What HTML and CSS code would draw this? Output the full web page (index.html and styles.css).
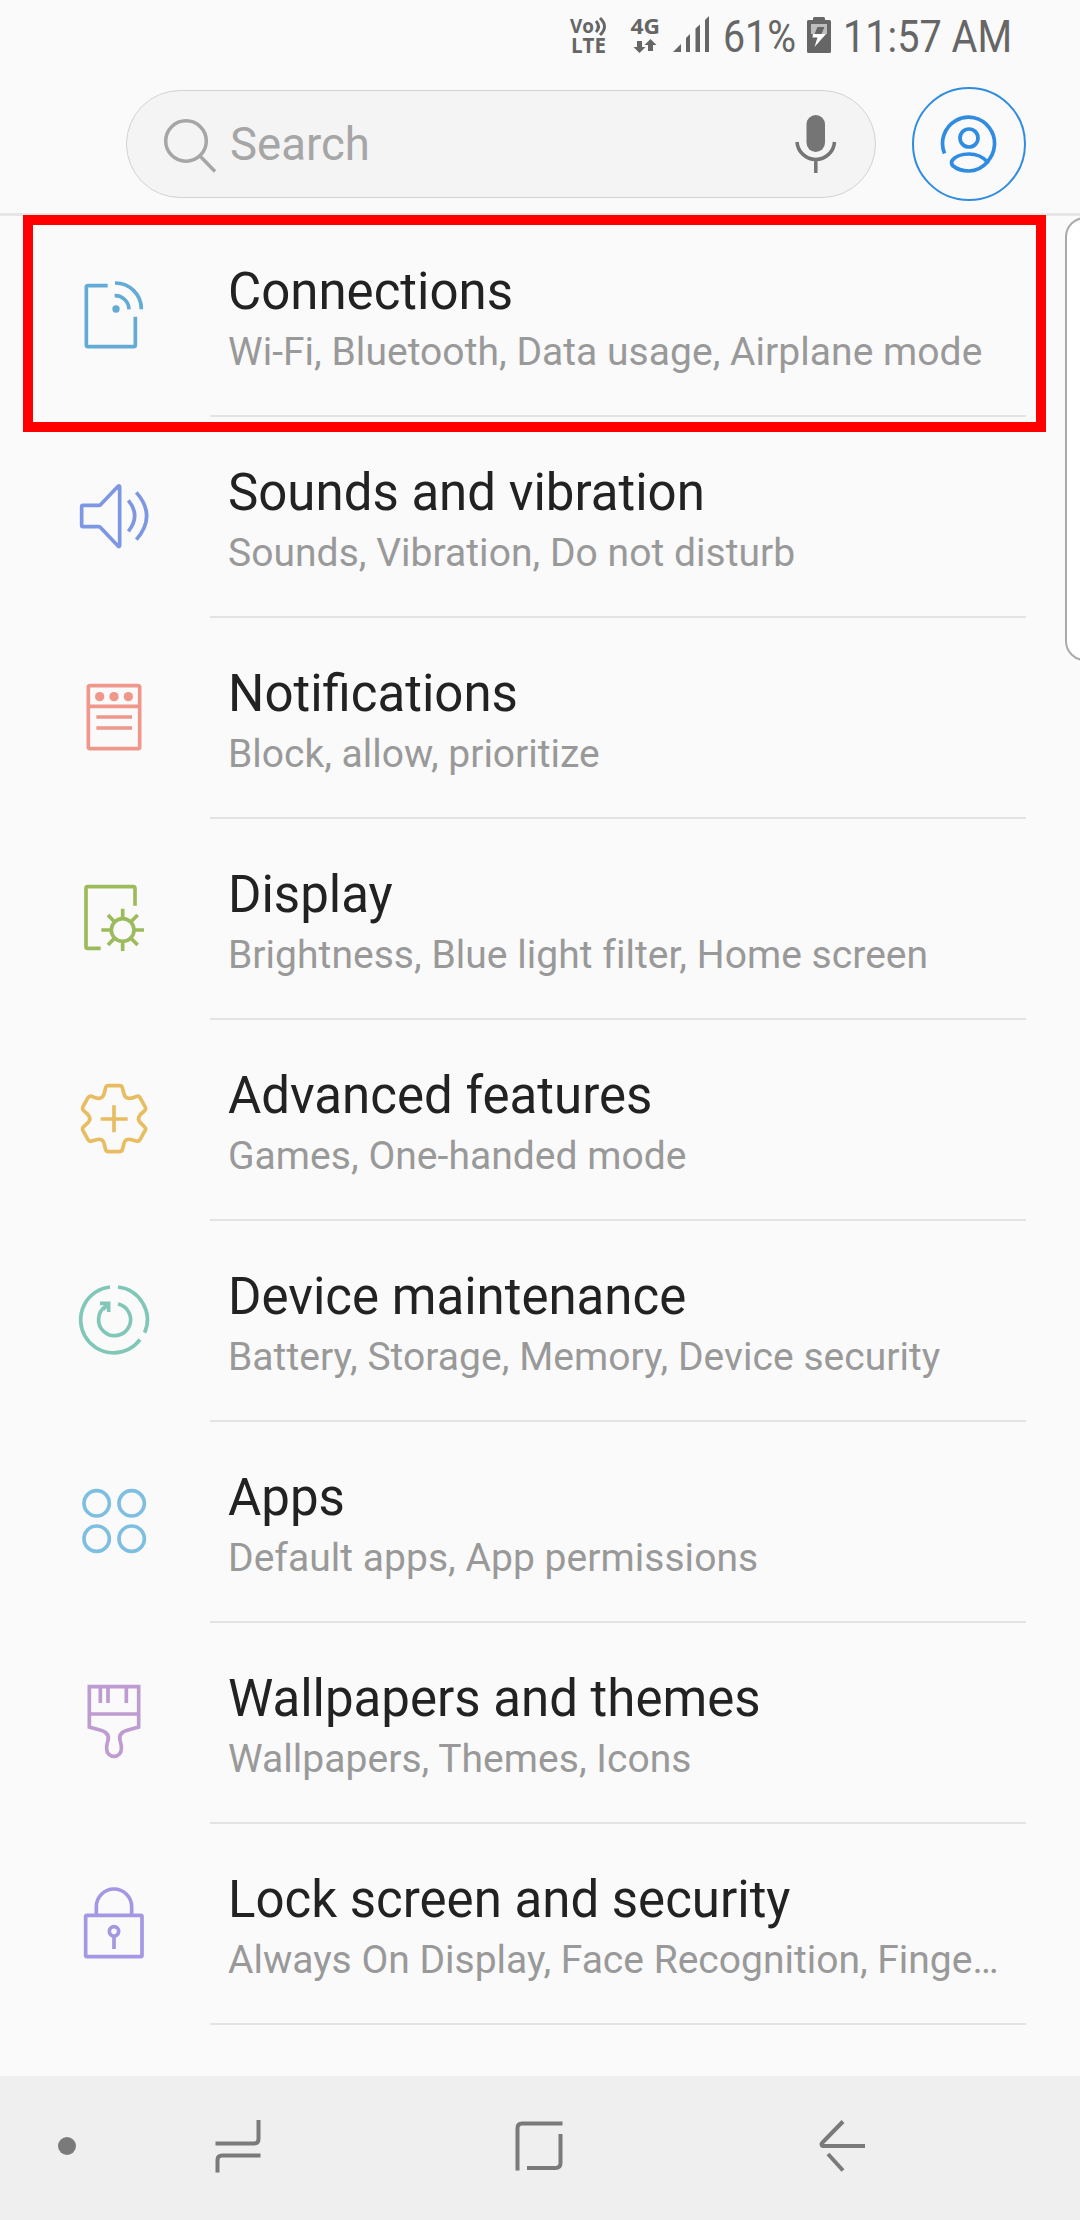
FILE: index.html
```html
<!DOCTYPE html>
<html lang="en">
<head>
    <meta charset="UTF-8">
    <title>Settings</title>
    <link rel="stylesheet" href="styles.css">
</head>
<body>
    <div class="phone">
        <header class="header">
            <!-- status bar -->
            <svg class="status" viewBox="540 0 540 70">
                <g class="status-small">
                    <text x="570" y="32.500" font-size="20" textLength="24" lengthAdjust="spacingAndGlyphs">Vo</text>
                    <text x="571" y="53" font-size="21" textLength="35" lengthAdjust="spacingAndGlyphs">LTE</text>
                    <text x="630.500" y="34" font-size="22" textLength="29.500" lengthAdjust="spacingAndGlyphs">4G</text>
                </g>
                <path class="wave" d="M596 21q5 5.500 0 11M600 18q9 8.500 0 17"/>
                <path d="M637 41h5v6h3.500l-6 6-6-6h3.500zM648 51h5v-6h3.500l-6-6-6 6h3.500z"/>
                <path d="M673 52l8-8v8zM686 38l4-4v18h-4zM695.500 28.500l4.500-4v27.500h-4.500zM705 20l4-4v36h-4z"/>
                <text x="723" y="52" font-size="45" textLength="73" lengthAdjust="spacingAndGlyphs">61%</text>
                <path d="M808.500 20h4.500v-1.500q0-1.500 1.500-1.500h9q1.500 0 1.500 1.500V20h4.500q1.500 0 1.500 1.500v30q0 1.500-1.500 1.500h-21q-1.500 0-1.500-1.500v-30q0-1.500 1.500-1.500z"/>
                <path d="M811 24h16v10h-16z" fill="#bdbdbd"/>
                <path d="M817.500 27h7l-3 7h-7z"/>
                <path d="M813 34h13l-11.500 13 3-9.500h-5z" fill="#fff"/>
                <text x="843" y="52" font-size="45" textLength="169" lengthAdjust="spacingAndGlyphs">11:57 AM</text>
            </svg>
            <div class="toolbar">
                <div class="search">
                    <svg class="search-icon" viewBox="0 0 60 60" fill="none" stroke="#a6a6a6" stroke-width="3.500">
                        <circle cx="24" cy="27" r="20.300"/>
                        <path d="M38 42l15 15.500"/>
                    </svg>
                    <span class="placeholder">Search</span>
                    <svg class="mic" viewBox="0 0 44 60">
                        <rect x="12.500" y="1" width="18.500" height="37" rx="9.200" fill="#757575"/>
                        <path d="M3 28a18.800 18.800 0 0 0 37.500 0M21.800 46v13" fill="none" stroke="#757575" stroke-width="3.500"/>
                    </svg>
                </div>
                <div class="profile">
                    <svg width="60" height="60" viewBox="0 0 60 60" fill="none" stroke="#2f8ce0" stroke-width="3.700">
                        <path d="M5.500 39.500A26 26.300 0 1 1 47.500 48.500"/>
                        <circle cx="30" cy="24" r="9"/>
                        <path d="M30 40c7 0 14 3 18.500 8C44 53 38 57 30 57c-7 0-13-2.500-16.500-5.500q-2-3 0-5.500C17 42 23 40 30 40z"/>
                    </svg>
                </div>
            </div>
        </header>

        <main class="list">
            <div class="row">
                <svg class="icon blue" viewBox="0 -3 330 330">
                    <path d="M143 77H84q-5 0-5 5v173q0 5 5 5h137q5 0 5-5v-85M165 69a78 78 0 0 1 79 79M164 107a42 42 0 0 1 43 41"/>
                    <circle class="solid" cx="168" cy="147" r="11"/>
                </svg>
                <div class="text">
                    <div class="title">Connections</div>
                    <div class="sub">Wi-Fi, Bluetooth, Data usage, Airplane mode</div>
                </div>
            </div>
            <div class="row">
                <svg class="icon indigo" viewBox="0 0 330 330">
                    <path d="M69 136h47q4 0 7-3l51-54q5-4 5 2v175q0 6-5 2l-51-54q-3-4-7-4H69q-4 0-4-4v-56q0-4 4-4zM205 121q38 46 0 93M229 97q62 71 0 142"/>
                </svg>
                <div class="text">
                    <div class="title">Sounds and vibration</div>
                    <div class="sub">Sounds, Vibration, Do not disturb</div>
                </div>
            </div>
            <div class="row">
                <svg class="icon coral" viewBox="0 3 330 330">
                    <rect x="85" y="77" width="154" height="189" rx="5"/>
                    <path d="M85 139h154M109 171h107M109 204h107"/>
                    <g class="solid">
                        <circle cx="119" cy="110" r="14"/>
                        <circle cx="162" cy="110" r="14"/>
                        <circle cx="205" cy="110" r="14"/>
                    </g>
                </svg>
                <div class="text">
                    <div class="title">Notifications</div>
                    <div class="sub tight">Block, allow, prioritize</div>
                </div>
            </div>
            <div class="row">
                <svg class="icon green" viewBox="0 6 330 330">
                    <path d="M122 265H83q-5 0-5-5V85q0-5 5-5h137q5 0 5 5v52"/>
                    <circle cx="188" cy="210" r="34"/>
                    <path d="M188 176v-30M188 244v29M154 210h-30M222 210h30M164 186l-20-21M212 186l21-21M164 234l-20 21M212 234l21 21"/>
                </svg>
                <div class="text">
                    <div class="title">Display</div>
                    <div class="sub">Brightness, Blue light filter, Home screen</div>
                </div>
            </div>
            <div class="row">
                <svg class="icon yellow" viewBox="0 9 330 330">
                    <path d="M145 77h34q6 0 8 6l5 19q4 14 17 13 9 0 19-5 8-4 12 3l15 27q4 6-1 12l-13 12q-11 12 0 24l13 13q5 5 1 11l-15 27q-4 7-12 4l-13-4q-19-5-23 11l-5 19q-2 6-8 6h-34q-6 0-8-6l-5-19q-4-16-23-11l-13 4q-8 3-12-4l-15-27q-3-6 1-11l14-13q11-12 0-24l-14-13q-4-5-1-11l15-27q4-7 12-4 10 5 18 6 14 1 18-13l5-19q2-6 8-6zM162 136v81M122 177h81"/>
                </svg>
                <div class="text">
                    <div class="title">Advanced features</div>
                    <div class="sub">Games, One-handed mode</div>
                </div>
            </div>
            <div class="row">
                <svg class="icon teal" viewBox="0 12 330 330">
                    <path d="M150 81a99 99 0 1 0 90 158M174 81a99 99 0 0 1 80 137"/>
                    <path d="M174 132a48 48 0 1 1-37 7M120 130h26v26M146 131l-17 17"/>
                </svg>
                <div class="text">
                    <div class="title">Device maintenance</div>
                    <div class="sub">Battery, Storage, Memory, Device security</div>
                </div>
            </div>
            <div class="row">
                <svg class="icon sky" viewBox="0 15 330 330">
                    <circle cx="110" cy="130" r="38"/>
                    <circle cx="215" cy="130" r="38"/>
                    <circle cx="110" cy="236" r="38"/>
                    <circle cx="215" cy="236" r="38"/>
                </svg>
                <div class="text">
                    <div class="title">Apps</div>
                    <div class="sub">Default apps, App permissions</div>
                </div>
            </div>
            <div class="row">
                <svg class="icon purple" viewBox="0 3 330 330">
                    <path d="M88 65h148v121l-32 9q-30 8-24 31c3 12 5 14 4 26a22 22 0 0 1-44 0c-1-12 1-14 4-26q6-23-24-31l-32-9zM88 147h148M121 65v49M144 65v49M199 65v49"/>
                </svg>
                <div class="text">
                    <div class="title">Wallpapers and themes</div>
                    <div class="sub">Wallpapers, Themes, Icons</div>
                </div>
            </div>
            <div class="row">
                <svg class="icon violet" viewBox="0 -9 330 330">
                    <rect x="77" y="136" width="169" height="124" rx="4"/>
                    <path d="M109 136v-26a53 53 0 0 1 106 0v26M162 200v37"/>
                    <circle cx="162" cy="184" r="14"/>
                </svg>
                <div class="text">
                    <div class="title">Lock screen and security</div>
                    <div class="sub tight">Always On Display, Face Recognition, Finge…</div>
                </div>
            </div>
        </main>

        <nav class="navbar">
            <span class="dot"></span>
            <svg viewBox="0 0 60 60">
                <path d="M7.500 27.500H46q4.500 0 4.500-4.500V4M52.500 39.500H14q-4.500 0-4.500 4.500v12.500"/>
            </svg>
            <svg viewBox="0 0 60 60">
                <path d="M53.500 7.500H13q-4.500 0-4.500 4.500v42.500M18 52h28.500q5 0 5-5V18"/>
            </svg>
            <svg viewBox="0 0 60 60">
                <path d="M53 30H11q-3-1 0-4L31 5.500M16 38l15 16.500"/>
            </svg>
        </nav>

        <div class="highlight"></div>
        <div class="edge-handle"></div>
    </div>
</body>
</html>
```
FILE: styles.css
```css
* { box-sizing: border-box; }
body { margin: 0; background-color: #fafafa; font-family: Roboto, sans-serif; }
svg { display: block; flex: none; }

.phone { position: relative; width: 1080px; height: 2220px; overflow: hidden; display: flex; flex-direction: column; }

.header { height: 216px; border-bottom: 3px solid #e6e6e6; }
.status { width: 540px; height: 70px; margin-left: 540px; fill: #666; }
.status-small { font-family: "Open Sans", sans-serif; font-weight: 700; }
.wave { fill: none; stroke: #666; stroke-width: 3; }

.toolbar { display: flex; align-items: center; gap: 36px; padding: 17px 54px 0 126px; }
.search { display: flex; align-items: center; width: 750px; height: 108px; padding: 0 37px 0 35px; border: 1px solid #d2d2d2; border-radius: 54px; background-color: #f4f4f4; }
.search-icon { width: 60px; height: 60px; }
.placeholder { flex: 1; margin-left: 8px; padding-top: 2px; font-size: 45.5px; line-height: 60px; color: #a6a6a6; }
.mic { width: 44px; height: 60px; }
.profile { display: flex; align-items: center; justify-content: center; width: 114px; height: 114px; border: 2px solid #2f8ce0; border-radius: 50%; }

.list { flex: 1; }
.row { display: flex; height: 201px; padding: 0 54px 0 60px; }
.icon { width: 110px; height: 110px; margin: 43px 40px 0 0; fill: none; stroke: currentColor; stroke-width: 11; }
.solid { fill: currentColor; stroke: none; }
.text { flex: 1; padding: 46px 0 0 18px; border-bottom: 2px solid #e3e3e3; white-space: nowrap; }
.title { font-size: 51px; line-height: 60px; color: #222; }
.sub { font-size: 39px; line-height: 60px; letter-spacing: 0.04px; color: #999; }
.sub.tight { letter-spacing: 0; }

.blue { color: #62abd5; }
.indigo { color: #7e97e3; }
.coral { color: #f0978c; }
.green { color: #9cbb5c; }
.yellow { color: #e8bd62; }
.teal { color: #81c7b7; }
.sky { color: #7dbee1; }
.purple { color: #be9bd0; }
.violet { color: #a597e3; }

.navbar { display: grid; grid-template-columns: 134px 207px 396px 210px; justify-items: center; align-items: center; height: 144px; padding-bottom: 4px; background-color: #efefef; }
.navbar svg { width: 60px; height: 60px; fill: none; stroke: #7a7a7a; stroke-width: 4; }
.dot { width: 18px; height: 18px; border-radius: 50%; background-color: #7a7a7a; }

.highlight { position: absolute; left: 23px; top: 215px; width: 1023px; height: 217px; border: 10px solid #f00; }
.edge-handle { position: absolute; left: 1065px; top: 217px; width: 40px; height: 444px; border: 2px solid #aaa; border-radius: 20px; background-color: #fff; }
```
